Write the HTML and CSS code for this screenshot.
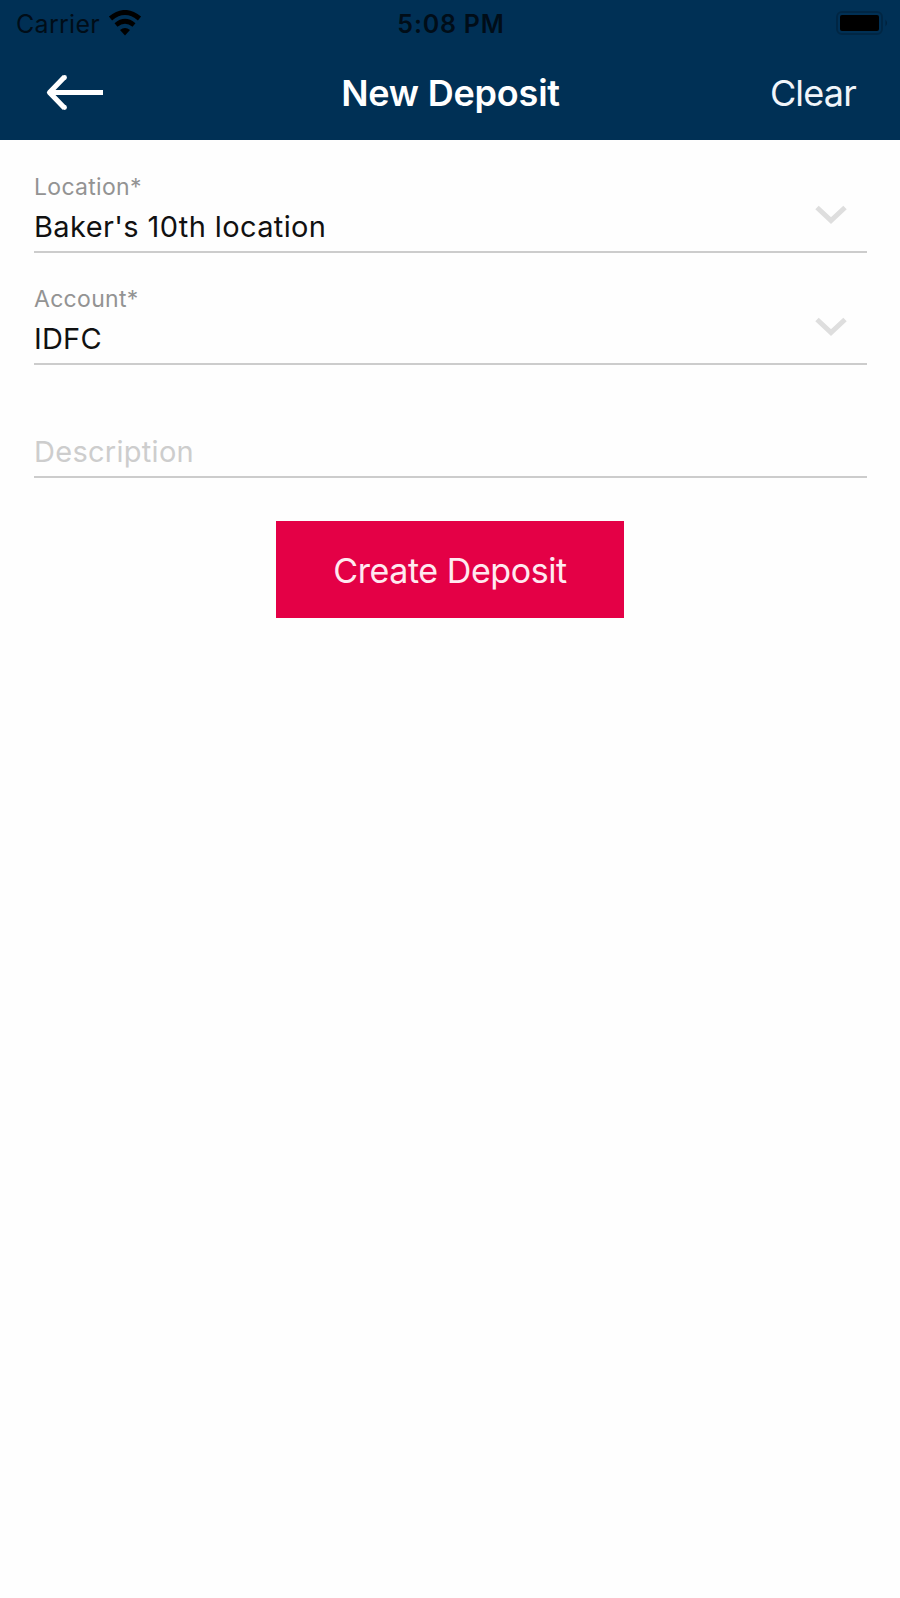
FILE: index.html
```
<!DOCTYPE html>
<html>

	<head>
		<meta charset="UTF-8">
		<title>New Deposit</title>
		<link rel="stylesheet" href="styles.css">
	</head>

	<body>
		<header class="header">
			<div class="status-bar">
				<div class="carrier">
					<span class="carrier-name">Carrier</span>
					<svg class="wifi" width="34" height="26" viewBox="0 0 34 26">
						<path d="M2.500 8.500Q17 -3.500 31.500 8.500" fill="none" stroke="#000" stroke-width="5"/>
						<path d="M8 15Q17 7.500 26 15" fill="none" stroke="#000" stroke-width="4.600"/>
						<path d="M12 20Q17 16 22 20L17 25.500z"/>
					</svg>
				</div>
				<span class="time">5:08 PM</span>
				<svg class="battery" width="54" height="24" viewBox="0 0 54 24">
					<rect x="1" y="1" width="45" height="22" rx="5" fill="none" stroke="#000" stroke-opacity=".2" stroke-width="2"/>
					<rect x="4" y="4" width="39" height="16" rx="2"/>
					<path d="M49.500 8.500Q52.500 12 49.500 15.500z" fill-opacity=".3"/>
				</svg>
			</div>
			<div class="nav-bar">
				<a href="javascript:;" class="back">
					<svg width="60" height="38" viewBox="0 0 60 38">
						<path d="M58 18.500H5M19.500 3L4.500 18.500L19.500 34" fill="none" stroke="#fff" stroke-width="5.200" stroke-linejoin="round"/>
						<circle cx="19.500" cy="3.500" r="2.400" fill="#fff"/>
						<circle cx="19.500" cy="33.500" r="2.400" fill="#fff"/>
					</svg>
				</a>
				<h1 class="title">New Deposit</h1>
				<a href="javascript:;" class="clear">Clear</a>
			</div>
		</header>
		<form class="form">
			<div class="field">
				<div class="field-text">
					<div class="label">Location*</div>
					<div class="value location">Baker's 10th location</div>
				</div>
				<svg class="chevron" width="32" height="20" viewBox="0 0 32 20">
					<path d="M2 2.500L16 15.500L30 2.500" fill="none" stroke="#dedede" stroke-width="5"/>
				</svg>
			</div>
			<div class="field">
				<div class="field-text">
					<div class="label">Account*</div>
					<div class="value">IDFC</div>
				</div>
				<svg class="chevron" width="32" height="20" viewBox="0 0 32 20">
					<path d="M2 2.500L16 15.500L30 2.500" fill="none" stroke="#dedede" stroke-width="5"/>
				</svg>
			</div>
			<div class="field">
				<div class="value placeholder">Description</div>
			</div>
			<button type="button" class="create">Create Deposit</button>
		</form>
	</body>

</html>
```

FILE: styles.css
```
* {
	box-sizing: border-box;
}

body {
	margin: 0;
	background: #fefefe;
	font-family: Inter, "Liberation Sans", sans-serif;
	color: #111;
}

.header {
	height: 140px;
	background: #003055;
}

.status-bar {
	display: grid;
	grid-template-columns: 1fr auto 1fr;
	align-items: center;
	height: 48px;
	padding: 0 10px 0 16px;
	font-size: 25px;
	line-height: 30px;
	color: #000d18;
}

.carrier {
	display: flex;
	align-items: center;
	gap: 8px;
}

.carrier-name {
	letter-spacing: .3px;
}

.wifi {
	margin-top: -2px;
}

.time {
	margin-right: 4px;
	font-weight: 600;
	letter-spacing: .8px;
}

.battery {
	justify-self: end;
	margin-top: -2px;
}

.nav-bar {
	display: grid;
	grid-template-columns: 1fr auto 1fr;
	align-items: center;
	height: 90px;
	padding: 0 44px 0 45px;
}

.back {
	display: flex;
}

.title {
	margin: 0;
	font-size: 36px;
	line-height: 44px;
	font-weight: 600;
	letter-spacing: -.2px;
	color: #fff;
}

.clear {
	justify-self: end;
	font-size: 36px;
	line-height: 44px;
	letter-spacing: -.8px;
	color: #f0f5fa;
	text-decoration: none;
}

.form {
	display: flex;
	flex-direction: column;
	padding: 0 33px 0 34px;
}

.field {
	display: flex;
	align-items: flex-end;
	justify-content: space-between;
	height: 112.5px;
	padding-bottom: 6px;
	border-bottom: 2px solid #ccc;
}

.label {
	margin-bottom: 8px;
	font-size: 23px;
	line-height: 28px;
	letter-spacing: .3px;
	color: #939393;
}

.value {
	font-size: 29px;
	line-height: 36px;
	letter-spacing: .2px;
}

.location {
	letter-spacing: .38px;
}

.placeholder {
	letter-spacing: .28px;
	color: #cdcdcd;
}

.chevron {
	margin: 0 20px 20px 0;
}

.create {
	align-self: center;
	width: 348px;
	height: 97px;
	margin: 43px 1px 0 0;
	padding: 3px 0 0;
	border: 0;
	background: #e40046;
	font-family: inherit;
	font-size: 34px;
	line-height: 42px;
	letter-spacing: -.43px;
	color: #ffe9f0;
}
```
